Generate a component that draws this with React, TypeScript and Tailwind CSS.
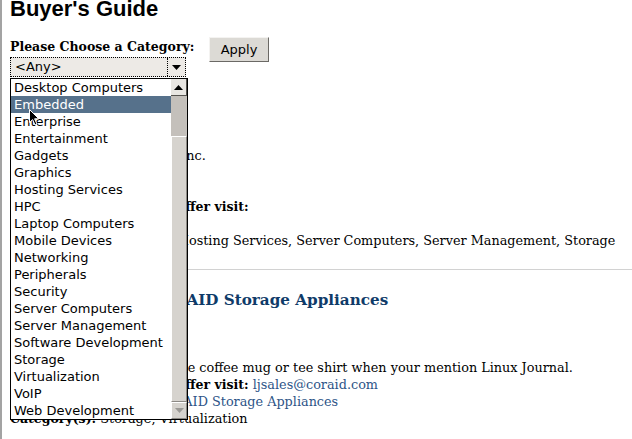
import { clsx } from "clsx";
import type { ReactNode } from "react";

const categories = [
  "Desktop Computers",
  "Embedded",
  "Enterprise",
  "Entertainment",
  "Gadgets",
  "Graphics",
  "Hosting Services",
  "HPC",
  "Laptop Computers",
  "Mobile Devices",
  "Networking",
  "Peripherals",
  "Security",
  "Server Computers",
  "Server Management",
  "Software Development",
  "Storage",
  "Virtualization",
  "VoIP",
  "Web Development",
];

function Triangle({ up, color }: { up?: boolean; color: string }) {
  return (
    <svg width="9" height="5" viewBox="0 0 9 5" className="block">
      <path d={up ? "M0 5 L4.5 0 L9 5 Z" : "M0 0 L9 0 L4.5 5 Z"} fill={color} />
    </svg>
  );
}

// field label inside a listing
function B({ children }: { children: ReactNode }) {
  return <b className="text-[12.5px]">{children}</b>;
}

export default function App() {
  return (
    <div className="relative h-[439px] w-[632px] overflow-hidden border-l-2 border-[#a3a3a3] bg-white pl-2 font-['DejaVu_Serif',serif] text-[12.8px] leading-[17px] text-black">
      <h1 className="-mt-[4px] font-['Liberation_Sans',Arial,sans-serif] text-[22px] font-bold leading-[26px]">
        Buyer's Guide
      </h1>

      {/* category filter */}
      <form className="mt-[15px] flex items-start">
        <div className="w-[199px]">
          <label className="mt-[1px] block whitespace-nowrap text-[12.5px] font-bold">Please Choose a Category:</label>
          <div className="mt-[2px] flex h-[20px] w-[176px] border border-dotted border-black bg-[#edeae6] font-['DejaVu_Sans',sans-serif] text-[13px] leading-[18px]">
            <span className="flex-1 pl-[4px]">&lt;Any&gt;</span>
            <span className="flex w-[18px] items-center justify-center border-l border-dotted border-black">
              <Triangle color="#000" />
            </span>
          </div>
        </div>
        <button
          type="button"
          className="h-[25px] w-[60px] border border-t-[#f4f3f1] border-l-[#f4f3f1] border-r-[#6b6965] border-b-[#6b6965] bg-[#dcdad5] font-['DejaVu_Sans',sans-serif] text-[13px] leading-[22px] text-black"
        >
          Apply
        </button>
      </form>

      {/* first listing */}
      <div className="mt-[70px] whitespace-nowrap">
        <div>
          <B>Company:</B> Tyan Systems, Inc.
        </div>
        <div>
          <B>Offer:</B>
        </div>
        <div className="mt-[17px]">
          <B>For further info on this offer visit:</B>
        </div>
        <div>
          <B>Product(s):</B>
        </div>
        <div>
          <B>Category(s):</B> Embedded, Hosting Services, Server Computers, Server Management, Storage
        </div>
      </div>

      <hr className="mt-[20px] border-[#d2d2d2]" />

      {/* second listing */}
      <div className="whitespace-nowrap">
        <h3 className="mt-[20px] text-[15.2px] font-bold leading-[20px] text-[#0f3b69]">
          CORAID, Inc. — CORAID Storage Appliances
        </h3>
        <div className="mt-[32px]">
          <B>Company:</B> Coraid, Inc.
        </div>
        <div>
          <B>Special Offer:</B> Obtain a free coffee mug or tee shirt when your mention Linux Journal.
        </div>
        <div>
          <B>For further info on this offer visit:</B> <a className="text-[#2d5487]">ljsales@coraid.com</a>
        </div>
        <div>
          <B>Product Homepage:</B> <a className="text-[#2d5487]">CORAID Storage Appliances</a>
        </div>
        <div>
          <B>Category(s):</B> Storage, Virtualization
        </div>
      </div>

      {/* open select list */}
      <div className="absolute left-[8px] top-[78px] flex h-[342px] w-[178px] border border-black bg-white font-['DejaVu_Sans',sans-serif] text-[13px] leading-[17px]">
        <ul className="flex-1">
          {categories.map((c) => (
            <li
              key={c}
              className={clsx(
                "h-[17px] whitespace-nowrap pl-[3px]",
                c === "Embedded" ? "bg-[#56718b] text-white" : "text-black"
              )}
            >
              {c}
            </li>
          ))}
        </ul>
        <div className="flex w-[16px] flex-col bg-[#c4c0bb]">
          <div className="flex h-[17px] items-center justify-center border-b border-r border-[#55534f] bg-[#e8e6e2]">
            <Triangle up color="#000" />
          </div>
          <div className="h-[40px]" />
          <div className="flex-1 border border-t-white border-l-white border-r-[#8c8984] border-b-[#8c8984] bg-[#d6d3ce]" />
          <div className="flex h-[17px] items-center justify-center border border-t-white border-l-white border-r-[#8c8984] border-b-[#8c8984] bg-[#d6d3ce]">
            <Triangle color="#9b9995" />
          </div>
        </div>
      </div>

      {/* mouse pointer */}
      <svg className="absolute left-[27px] top-[109px]" width="11" height="17" viewBox="0 0 11 17">
        <path
          d="M0.5 0.5 L0.5 13.5 L3.6 10.6 L6 16 L8 15.1 L5.6 9.8 L9.8 9.8 Z"
          fill="#000"
          stroke="#fff"
          strokeWidth="1"
          strokeLinejoin="round"
        />
      </svg>
    </div>
  );
}
